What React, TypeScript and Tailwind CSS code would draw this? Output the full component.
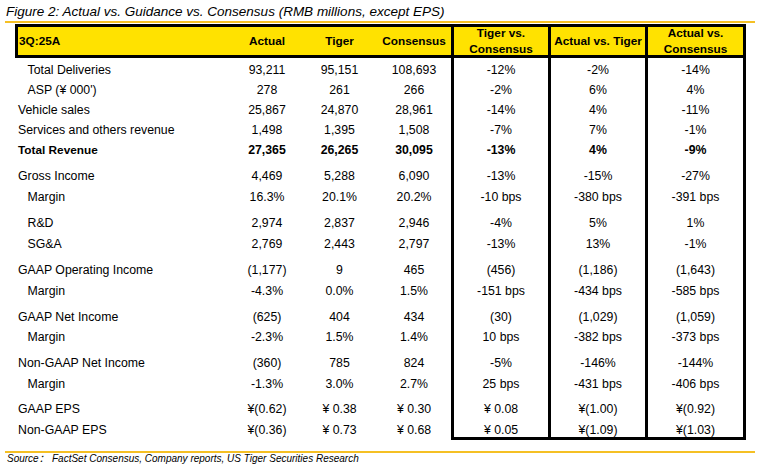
type Row = {
  label: string;
  vals: string[];
  indent?: boolean;
  bold?: boolean;
  h: string;
  pt?: string;
  last?: boolean;
};

// heights/paddings tuned so each row sits where the figure puts it
const ROWS: Row[] = [
  { label: "Total Deliveries", indent: true, vals: ["93,211", "95,151", "108,693", "-12%", "-2%", "-14%"], h: "h-[22px]", pt: "pt-[2px]" },
  { label: "ASP (¥ 000')", indent: true, vals: ["278", "261", "266", "-2%", "6%", "4%"], h: "h-[20px]" },
  { label: "Vehicle sales", vals: ["25,867", "24,870", "28,961", "-14%", "4%", "-11%"], h: "h-[20px]" },
  { label: "Services and others revenue", vals: ["1,498", "1,395", "1,508", "-7%", "7%", "-1%"], h: "h-[20px]" },
  { label: "Total Revenue", bold: true, vals: ["27,365", "26,265", "30,095", "-13%", "4%", "-9%"], h: "h-[20px]" },
  { label: "Gross Income", vals: ["4,469", "5,288", "6,090", "-13%", "-15%", "-27%"], h: "h-[26px]", pt: "pt-[6px]" },
  { label: "Margin", indent: true, vals: ["16.3%", "20.1%", "20.2%", "-10 bps", "-380 bps", "-391 bps"], h: "h-[22px]" },
  { label: "R&D", indent: true, vals: ["2,974", "2,837", "2,946", "-4%", "5%", "1%"], h: "h-[25px]", pt: "pt-[5px]" },
  { label: "SG&A", indent: true, vals: ["2,769", "2,443", "2,797", "-13%", "13%", "-1%"], h: "h-[21px]" },
  { label: "GAAP Operating Income", vals: ["(1,177)", "9", "465", "(456)", "(1,186)", "(1,643)"], h: "h-[26px]", pt: "pt-[6px]" },
  { label: "Margin", indent: true, vals: ["-4.3%", "0.0%", "1.5%", "-151 bps", "-434 bps", "-585 bps"], h: "h-[21px]" },
  { label: "GAAP Net Income", vals: ["(625)", "404", "434", "(30)", "(1,029)", "(1,059)"], h: "h-[26px]", pt: "pt-[6px]" },
  { label: "Margin", indent: true, vals: ["-2.3%", "1.5%", "1.4%", "10 bps", "-382 bps", "-373 bps"], h: "h-[20px]" },
  { label: "Non-GAAP Net Income", vals: ["(360)", "785", "824", "-5%", "-146%", "-144%"], h: "h-[26px]", pt: "pt-[6px]" },
  { label: "Margin", indent: true, vals: ["-1.3%", "3.0%", "2.7%", "25 bps", "-431 bps", "-406 bps"], h: "h-[21px]" },
  { label: "GAAP EPS", vals: ["¥(0.62)", "¥ 0.38", "¥ 0.30", "¥ 0.08", "¥(1.00)", "¥(0.92)"], h: "h-[25px]", pt: "pt-[5px]" },
  { label: "Non-GAAP EPS", vals: ["¥(0.36)", "¥ 0.73", "¥ 0.68", "¥ 0.05", "¥(1.09)", "¥(1.03)"], h: "h-[21px]", pt: "pt-[4px]", last: true },
];

// body column widths (left edge of the table at x=15)
const BODY_W = ["w-[70px]", "w-[75px]", "w-[74px]", "w-[97px]", "w-[97px]", "w-[101px]"];

export default function App() {
  return (
    <div className="h-[471px] w-[760px] overflow-hidden bg-white font-['Liberation_Sans',Arial,sans-serif] text-black">
      <div className="pl-[6px] pt-[3px] text-[13.5px] italic leading-[18px]">
        Figure 2: Actual vs. Guidance vs. Consensus (RMB millions, except EPS)
      </div>
      <div className="ml-[5px] h-[2px] w-[750px] bg-[#F5C024]" />

      <div className="ml-[15px] mt-[1px] w-[731px]">
        {/* header */}
        <div className="flex h-[34px] border-[3px] border-black bg-[#FFE200] text-[11.8px] font-bold leading-[16.5px]">
          <div className="flex w-[214px] items-center pl-[1px]">3Q:25A</div>
          <div className="flex w-[70px] items-center justify-center">Actual</div>
          <div className="flex w-[75px] items-center justify-center">Tiger</div>
          <div className="flex w-[74px] items-center justify-center">Consensus</div>
          <div className="flex w-[97px] items-center justify-center border-l-[3px] border-black text-center">
            Tiger vs.
            <br />
            Consensus
          </div>
          <div className="flex w-[97px] items-center justify-center border-l-[3px] border-black whitespace-nowrap">
            Actual vs. Tiger
          </div>
          <div className="flex w-[98px] items-center justify-center border-l-[3px] border-black text-center">
            Actual vs.
            <br />
            Consensus
          </div>
        </div>

        {/* body */}
        <div className="flex flex-col text-[12.3px] leading-[14px]">
          {ROWS.map((r, i) => (
            <div key={i} className={`flex ${r.h} ${r.bold ? "font-bold" : ""}`}>
              <div
                className={`flex w-[217px] items-center ${r.pt ?? ""} ${r.indent ? "pl-[12.5px]" : "pl-[3px]"} ${r.last ? "border-b-[3px] border-transparent" : ""} ${r.bold ? "text-[11.8px]" : ""}`}
              >
                {r.label}
              </div>
              {r.vals.map((v, j) => (
                <div
                  key={j}
                  className={`flex ${BODY_W[j]} items-center justify-center whitespace-pre ${r.pt ?? ""} ${
                    j >= 3 ? "border-l-[3px] border-black" : ""
                  } ${j === 5 ? "border-r-[3px]" : ""} ${
                    r.last ? (j >= 3 ? "border-b-[3px] border-black" : "border-b-[3px] border-transparent") : ""
                  }`}
                >
                  {v}
                </div>
              ))}
            </div>
          ))}
        </div>
      </div>

      <div className="ml-[5px] mt-[11px] h-[2px] w-[750px] bg-[#F5C024]" />
      <div className="flex pl-[7px] text-[10px] italic leading-[12px]">
        <span className="w-[45px] font-['Liberation_Sans','Noto_Sans_CJK_SC',sans-serif]">Source：</span>
        <span>FactSet Consensus, Company reports, US Tiger Securities Research</span>
      </div>
    </div>
  );
}
